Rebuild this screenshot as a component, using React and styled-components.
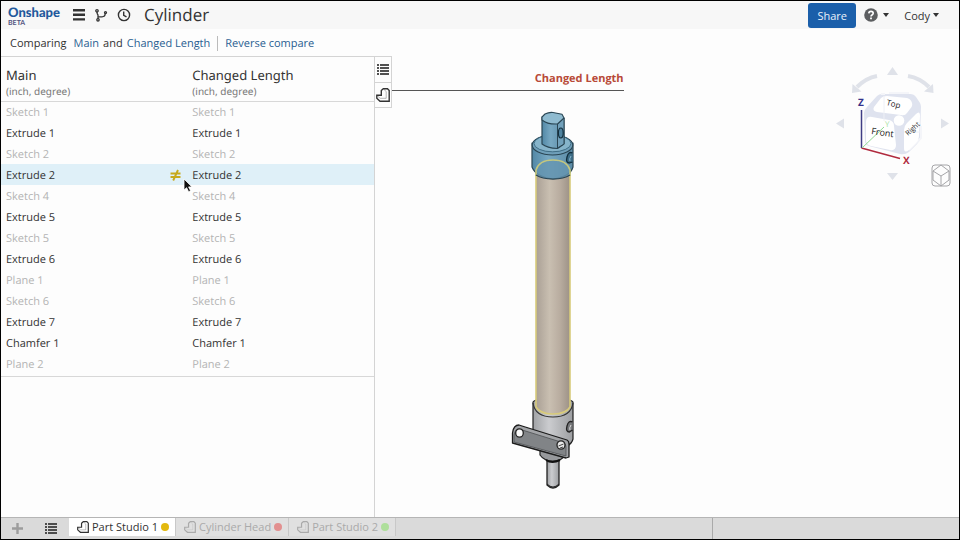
import React, { useState } from 'react'
import styled, { createGlobalStyle, css } from 'styled-components'

const GlobalStyle = createGlobalStyle`
  * { box-sizing: border-box; }
  body {
    margin: 0;
    background: #fdfdfd;
    color: #333;
    font-family: 'Open Sans', 'Noto Sans', sans-serif;
    font-size: 11px;
    text-rendering: geometricPrecision;
  }
  button {
    font: inherit;
    color: inherit;
    padding: 0;
    border: none;
    background: none;
    cursor: pointer;
  }
`

const Page = styled.div`
  display: flex;
  flex-direction: column;
  min-height: 100vh;
  border: 1px solid #000;
`

const Header = styled.header`
  display: flex;
  align-items: center;
  height: 28px;
  padding: 0 20px 0 7px;
  background: #f7f7f7;
`

const Logo = styled.a`
  width: 52px;
  margin-right: 11px;
  padding-top: 2px;
  color: #22599c;
  font-family: Lato, sans-serif;
  font-size: 13px;
  line-height: 14px;
  font-weight: 900;
  text-decoration: none;
`

const Beta = styled.small`
  display: block;
  color: #54557f;
  font-size: 7px;
  line-height: 8px;
  font-weight: 700;
`

const IconButton = styled.button`
  display: flex;
  align-items: center;
  justify-content: center;
  width: ${(p) => p.$width || 23}px;
  color: ${(p) => p.$color || '#333'};
`

const Title = styled.h1`
  flex: 1;
  margin: 0 0 0 12px;
  font-size: 17px;
  line-height: 24px;
  font-weight: 400;
`

const ShareButton = styled.button`
  width: 48px;
  height: 25px;
  margin-right: 8px;
  border-radius: 3px;
  background: #1b5faa;
  color: #e9f1fa;
`

const MenuButton = styled.button`
  display: flex;
  align-items: center;
  gap: ${(p) => p.$gap}px;
  margin-right: ${(p) => p.$space || 0}px;
`

const Caret = styled.span`
  border: 3px solid transparent;
  border-top: 4px solid #333;
  border-bottom: none;
`

const CompareBar = styled.div`
  display: flex;
  align-items: center;
  gap: 4px;
  height: 27px;
  padding: 2px 9px 0;
  font-weight: 500;
`

const Comparing = styled.span`
  margin-right: 3px;
`

const CompareLink = styled.a`
  color: #2a5f92;
  text-decoration: none;
`

const Separator = styled.span`
  width: 1px;
  height: 15px;
  margin: 0 3px;
  background: #bbb;
`

const Body = styled.main`
  flex: 1;
  display: flex;
`

const Panel = styled.section`
  width: 39%;
  border-top: 1px solid #d4d4d4;
  border-right: 1px solid #d4d4d4;
`

const TableFrame = styled.div`
  padding-bottom: 2px;
  border-bottom: 1px solid #d8d8d8;
`

const FeatureTable = styled.table`
  width: 100%;
  table-layout: fixed;
  border-collapse: collapse;
`

const HeadCell = styled.th`
  height: 44px;
  padding: 8px 5px 0;
  border-bottom: 1px solid #d8d8d8;
  text-align: left;
  vertical-align: middle;
  font-family: 'Noto Sans', sans-serif;
  font-size: 13px;
  line-height: 17px;
  font-weight: 400;
`

const Units = styled.small`
  display: block;
  color: #777;
  font-size: 10px;
  line-height: 15px;
`

const Row = styled.tr`
  color: ${(p) => (p.$muted ? '#b4b4b4' : '#333')};
  background: ${(p) => (p.$changed ? '#dff0f8' : 'transparent')};
`

const Cell = styled.td`
  position: relative;
  height: 21px;
  padding: 2px 6px 0 5px;
  line-height: 15px;
`

const CellContent = styled.div`
  display: flex;
  align-items: center;
  justify-content: space-between;
`

const Pointer = styled.svg`
  position: absolute;
  top: 14px;
  right: -7px;
`

const SideTabs = styled.div`
  align-self: flex-start;
  border: 1px solid #d4d4d4;
  border-left: none;
`

const SideTab = styled(IconButton)`
  width: 16px;
  height: 25px;

  & + & {
    border-top: 1px solid #d4d4d4;
  }
`

const Scene = styled.section`
  display: flex;
  flex-direction: column;
  width: 232px;
`

const SceneTitle = styled.h2`
  margin: 0;
  padding: 15px 0 3px;
  border-bottom: 1px solid #555;
  color: #b84a38;
  text-align: right;
  font-size: 11px;
  line-height: 16px;
  font-weight: 700;
`

const ModelView = styled.svg`
  align-self: flex-end;
  margin: 9px 14px 0 0;
`

const Navigator = styled.aside`
  display: grid;
  align-self: flex-start;
  margin: 4px 2px 0 auto;
`

const CubeView = styled.svg`
  grid-area: 1 / 1;
`

const ViewButton = styled.button`
  grid-area: 1 / 1;
  place-self: end;
  height: 23px;
  margin: 0 6px 3px 0;
`

const Footer = styled.footer`
  display: flex;
  height: 22px;
  border-top: 1px solid #b5b5b5;
  background: #dadada;
`

const DocTab = styled.button`
  display: flex;
  align-items: center;
  gap: 3px;
  height: 18px;
  padding: 0 6px 1px 8px;
  border-right: 1px solid #c8c8c8;
  background: #e0e0e0;
  color: #aaa;

  ${(p) =>
    p.$active &&
    css`
      background: #fff;
      color: #333;
      font-weight: 500;
    `}
`

const Dot = styled.span`
  width: 8px;
  height: 8px;
  border-radius: 50%;
  background: ${(p) => p.$color};
`

const FooterSpace = styled.div`
  flex: 1;
  border-right: 1px solid #aaa;
`

const FooterEnd = styled.div`
  width: 246px;
`

const features = [
  'Sketch 1', 'Extrude 1', 'Sketch 2', 'Extrude 2', 'Sketch 4', 'Extrude 5', 'Sketch 5',
  'Extrude 6', 'Plane 1', 'Sketch 6', 'Extrude 7', 'Chamfer 1', 'Plane 2',
]

const tabs = [
  { name: 'Part Studio 1', color: '#e3b90f' },
  { name: 'Cylinder Head', color: '#e29090' },
  { name: 'Part Studio 2', color: '#aedf9b' },
]

function MenuIcon() {
  return (
    <svg width="12" height="12" viewBox="0 0 12 12" fill="currentColor">
      <path d="M0 0h12v2.4H0zM0 4.6h12V7H0zM0 9.2h12v2.4H0z" />
    </svg>
  )
}

function BranchIcon() {
  return (
    <svg width="14" height="14" viewBox="0 0 14 14" fill="none" stroke="currentColor" strokeWidth="1.3">
      <circle cx="3" cy="2.8" r="1.2" />
      <circle cx="11.5" cy="4.6" r="1" />
      <circle cx="4" cy="11.8" r="1.2" />
      <path d="M3 4q0 2 1 3v4M4 8.8h4q3.2 0 3.2-3.2" />
    </svg>
  )
}

function ClockIcon() {
  return (
    <svg width="14" height="14" viewBox="0 0 14 14" fill="none" stroke="currentColor" strokeWidth="1.4">
      <circle cx="7" cy="7" r="5.6" />
      <path d="M6.7 3.5v3.8l2.8 1.6" />
    </svg>
  )
}

function HelpIcon() {
  return (
    <svg width="14" height="14" viewBox="0 0 14 14" fill="none">
      <circle cx="7" cy="7" r="6.8" fill="#5c5e60" />
      <path d="M4.8 5.4q.1-2 2.2-2 2.2 0 2.2 1.9 0 1-1.2 1.7-1 .6-1 1.5" stroke="#fff" strokeWidth="1.6" />
      <path d="M6.1 9.5h1.8v1.7H6.1z" fill="#fff" />
    </svg>
  )
}

function ListIcon() {
  return (
    <svg width="12" height="12" viewBox="0 0 12 12" fill="currentColor">
      <path d="M0 0h2v2H0zM3 0h9v2H3zM0 3h2v2H0zM3 3h9v2H3zM0 6h2v2H0zM3 6h9v2H3zM0 9h2v2H0zM3 9h9v2H3z" opacity=".85" />
    </svg>
  )
}

function PartIcon({ size = 12 }) {
  return (
    <svg width={size} height={size} viewBox="0 0 14 14" fill="none" stroke="currentColor" strokeWidth="1.4">
      <path d="M.8 7.3H5.3V2.6L7.3.8H11.5L13.2 2.5V13.2H4L.8 10.3z" />
      <path d="M1.5 8l2.7 2.3h6V3.5L8 1.5" strokeWidth=".7" opacity=".5" />
    </svg>
  )
}

function PlusIcon() {
  return (
    <svg width="11" height="11" viewBox="0 0 11 11" fill="currentColor">
      <path d="M4.3 0h2.4v4.3H11v2.4H6.7V11H4.3V6.7H0V4.3h4.3z" />
    </svg>
  )
}

function NotEqualIcon() {
  return (
    <svg width="11" height="13" viewBox="0 0 11 13" fill="none" stroke="#c7a91b" strokeWidth="1.9">
      <path d="M.5 4.5h10M.5 8h10M8 1 3.2 11.5" />
    </svg>
  )
}

function Cylinder() {
  return (
    <ModelView width="110" height="400" viewBox="0 0 110 400" strokeLinejoin="round">
      <defs>
        <linearGradient id="tube">
          <stop offset="0" stopColor="#aaa095" />
          <stop offset=".4" stopColor="#c9bfb1" />
          <stop offset=".7" stopColor="#b9ada0" />
          <stop offset="1" stopColor="#9d9286" />
        </linearGradient>
        <linearGradient id="blue">
          <stop offset="0" stopColor="#5288a6" />
          <stop offset=".4" stopColor="#78a9c3" />
          <stop offset="1" stopColor="#5b8ba6" />
        </linearGradient>
        <linearGradient id="steel">
          <stop offset="0" stopColor="#a0a2a5" />
          <stop offset=".4" stopColor="#cbcccf" />
          <stop offset="1" stopColor="#9c9ea1" />
        </linearGradient>
      </defs>

      {/* pin */}
      <path d="M47 356v29q6 6 12 0v-29z" fill="url(#steel)" stroke="#222" strokeWidth="1.3" />
      <path d="M47 384q6 6 12 0" fill="none" stroke="#222" />
      <path d="M40 345v10q4 6 13 6t12-6v-8z" fill="#97999c" stroke="#222" strokeWidth="1.2" />
      <path d="M46 360q6 4 14 0" fill="none" stroke="#111" strokeWidth="2" />

      {/* bottom cap */}
      <path d="M33 302q3-4 20-4t20 4v37q-2 9-20 10-18-1-20-10z" fill="url(#steel)" stroke="#222" strokeWidth="1.2" />
      <path d="M33 303q2 14 20 14t20-14" fill="none" stroke="#333" strokeWidth="1.2" />
      <path d="M72.5 322q-4-2-5.5 4t2.5 6l3-2" fill="#75777a" stroke="#222" strokeWidth="1.3" />
      <path d="M71 325q-2 3-1 5" fill="none" stroke="#ddd" />

      {/* tube */}
      <path d="M36 70v237q4 7 17 7t17-7V70z" fill="url(#tube)" stroke="#d8cb7b" strokeWidth="1.6" />

      {/* head */}
      <path d="M32 43v24q4 10 21 12 17-2 20-12V43z" fill="url(#blue)" stroke="#2a4654" strokeWidth="1.2" />
      <path d="M36 77v-7q3-10 17-10t17 10v5q-7 4-17 4-11 0-17-4z" fill="#6595b0" opacity=".8" />
      <ellipse cx="52.5" cy="45" rx="20.3" ry="10" fill="#6f9fb9" stroke="#2a4654" strokeWidth="1.1" />
      <ellipse cx="52.5" cy="43.5" rx="18.5" ry="8.3" fill="#86b4ca" stroke="#315e76" strokeWidth=".8" />
      <path d="M36 76v-6q3-10 17-10t17 10v6" fill="none" stroke="#c5c77e" strokeWidth="1.6" />
      <path d="M36 75q6 4 17 4t17-4" fill="none" stroke="#2a4654" strokeWidth="1.2" />
      <path d="M72.5 53q-4-2-5.5 4t2.5 6l3-1" fill="#3c6d87" stroke="#122e3c" strokeWidth="1.3" />
      <path d="M71 56q-2 3-1 5" fill="none" stroke="#8bb9cf" />

      {/* rod end */}
      <path d="M42 17v27q5 4 15.5 4.5L64 44V18z" fill="url(#blue)" stroke="#2a4654" strokeWidth="1.2" />
      <path d="M57.5 24 64 18v26l-6.5 4z" fill="#72a1bb" stroke="#2a4654" />
      <path d="M42 17l3-3q4-2 8-1.5l9 1.8 2 3.7-6.5 6q-10 .5-15.5-4z" fill="#8fbbd0" stroke="#2a4654" strokeWidth="1.1" />
      <ellipse cx="60.8" cy="33" rx="2.4" ry="5" fill="#4f83a0" stroke="#122e3c" strokeWidth="1.2" />

      {/* bracket plate */}
      <path d="M12.5 333q1-8 6.500-8l3 1 45 14q2 1 2 4v13l-3 1-53.5-15z" fill="#a2a4a7" stroke="#1c1c1c" strokeWidth="1.3" />
      <path d="M14 335q1-6 5-6l45 14q2 1 2 4v9l-52-14z" fill="#818487" stroke="#4e5053" strokeWidth=".8" />
      <ellipse cx="19.5" cy="333" rx="3.8" ry="4.2" fill="#fafafa" stroke="#222" strokeWidth="1.3" />
      <ellipse cx="61" cy="345" rx="4" ry="4.2" fill="#e8e8e8" stroke="#222" strokeWidth="1.3" />
      <path d="M58.5 346l5-2M60 348l3-1" stroke="#444" />
    </ModelView>
  )
}

function ViewCube() {
  return (
    <CubeView width="137" height="130" viewBox="0 0 137 130" fill="none">
      <g fill="#dfe2e9">
        <path d="M72.5 7 78 15H67zM16 63.5l8-5v10zM129 63.5l-8-5v10zM72.5 120l5.5-7H67z" />
        <path d="M32 33l.5-9 9 7.5zM113.5 33l-.5-9-9 7.5z" />
      </g>
      <path d="M57 16q-11 2-20 11M88 16q12 2 21 11" stroke="#dfe2e9" strokeWidth="4" />
      <path d="M44 53q0-3 3-6l10-11q2-2 5-2h28q4 0 6 3l4 6q1 2 1 4l-1 31q0 3-3 6l-8 8q-4 3-9 2l-31-8q-4-1-4-5z" fill="#dfe3ef" />
      <path d="M61 34h4M69 33h20M101 66v12l-12 12" stroke="#f4f5f9" strokeWidth="2" />
      <path d="M61 38q2-2 6-2l20 2q4 1 5 5 1 3-2 6l-3 4q-2 3-6 2l-24-3q-5-1-3-5z" fill="#fff" />
      <path d="M46 62q0-6 6-5l17 3q5 1 5 6l2 19q0 6-6 5l-19-4q-5-1-5-6z" fill="#fff" />
      <path d="M84 70q0-4 3-7l9-9q4-4 4 2l-1 19q0 5-3 8l-7 7q-5 4-5-2z" fill="#fff" />
      <path d="M84 72h16M64 36v25" stroke="#eef0f6" />
      <circle cx="79" cy="60.5" r="5.3" fill="#fff" />
      <path d="M41.5 50v38" stroke="#3f3d85" strokeWidth="1.5" />
      <path d="M41.5 88 80 98.5" stroke="#b02a3e" strokeWidth="1.5" />
      <path d="M42 88 64 67" stroke="#8fdb93" />
      <g fontSize="10" fontWeight="700">
        <text x="38" y="46" fill="#34318a">Z</text>
        <text x="83" y="104" fill="#b02a3e">X</text>
      </g>
      <text x="65" y="67" fill="#a9e3a6" fontSize="8">Y</text>
      <g fill="#222">
        <text x="51" y="74" fontSize="9" transform="rotate(8 51 74)">Front</text>
        <text x="66" y="45" fontSize="8" transform="rotate(14 66 45)">Top</text>
        <text x="88" y="76" fontSize="7" transform="rotate(-42 88 76)">Right</text>
      </g>
    </CubeView>
  )
}

export default function App() {
  const [active, setActive] = useState(0)

  return (
    <Page>
      <GlobalStyle />
      <Header>
        <Logo href="#">
          Onshape
          <Beta>BETA</Beta>
        </Logo>
        <IconButton $width={15} aria-label="Document menu"><MenuIcon /></IconButton>
        <IconButton $width={30} aria-label="Versions"><BranchIcon /></IconButton>
        <IconButton $width={16} aria-label="History"><ClockIcon /></IconButton>
        <Title>Cylinder</Title>
        <ShareButton>Share</ShareButton>
        <MenuButton $gap={5} $space={15} aria-label="Help">
          <HelpIcon />
          <Caret />
        </MenuButton>
        <MenuButton $gap={3}>
          Cody
          <Caret />
        </MenuButton>
      </Header>

      <CompareBar>
        <Comparing>Comparing</Comparing>
        <CompareLink href="#main">Main</CompareLink>
        <span>and</span>
        <CompareLink href="#changed">Changed Length</CompareLink>
        <Separator />
        <CompareLink href="#reverse">Reverse compare</CompareLink>
      </CompareBar>

      <Body>
        <Panel>
          <TableFrame>
            <FeatureTable>
              <thead>
                <tr>
                  <HeadCell>Main<Units>(inch, degree)</Units></HeadCell>
                  <HeadCell>Changed Length<Units>(inch, degree)</Units></HeadCell>
                </tr>
              </thead>
              <tbody>
                {features.map((name) => {
                  const changed = name === 'Extrude 2'
                  return (
                    <Row key={name} $muted={/^(Sketch|Plane)/.test(name)} $changed={changed}>
                      <Cell>
                        <CellContent>
                          {name}
                          {changed && <NotEqualIcon />}
                        </CellContent>
                        {changed && (
                          <Pointer width="12" height="15" viewBox="0 0 12 15">
                            <path d="M2 1v11l2.6-2.3 2 4 2-1-2-3.8H10z" fill="#111" stroke="#fff" strokeWidth=".8" />
                          </Pointer>
                        )}
                      </Cell>
                      <Cell>{name}</Cell>
                    </Row>
                  )
                })}
              </tbody>
            </FeatureTable>
          </TableFrame>
        </Panel>
        <SideTabs>
          <SideTab aria-label="Features"><ListIcon /></SideTab>
          <SideTab aria-label="Parts"><PartIcon size={14} /></SideTab>
        </SideTabs>
        <Scene>
          <SceneTitle>Changed Length</SceneTitle>
          <Cylinder />
        </Scene>
        <Navigator>
          <ViewCube />
          <ViewButton aria-label="View options">
            <svg width="20" height="23" viewBox="0 0 20 23" fill="none" stroke="#a5a5a8">
              <rect x="1" y="1" width="18" height="21" rx="3" />
              <path d="M10 1l8 6v9l-8 6-8-6V7zM2 7l8 5 8-5M10 12v10" />
            </svg>
          </ViewButton>
        </Navigator>
      </Body>

      <Footer>
        <IconButton $width={32} $color="#9c9c9c" aria-label="Add tab"><PlusIcon /></IconButton>
        <IconButton $width={36} aria-label="Tab list"><ListIcon /></IconButton>
        {tabs.map((tab, i) => (
          <DocTab key={tab.name} $active={i === active} onClick={() => setActive(i)}>
            <PartIcon />
            {tab.name}
            <Dot $color={tab.color} />
          </DocTab>
        ))}
        <FooterSpace />
        <FooterEnd />
      </Footer>
    </Page>
  )
}
